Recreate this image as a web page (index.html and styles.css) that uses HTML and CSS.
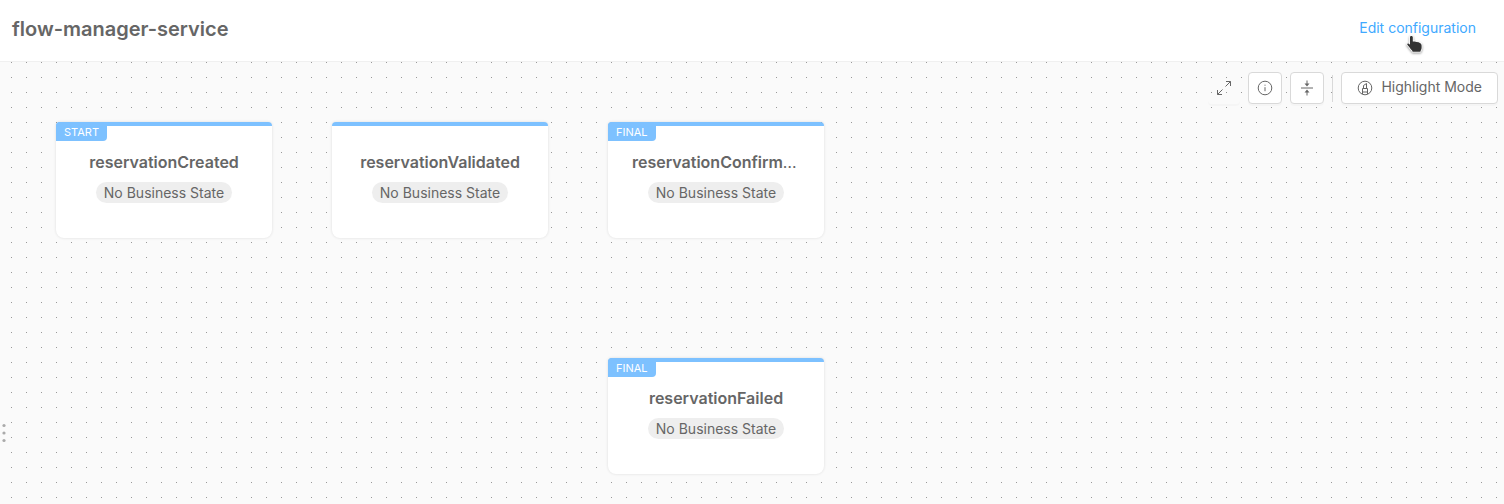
FILE: index.html
```html
<!DOCTYPE html>
<html lang="en">
<head>
<meta charset="utf-8">
<title>flow-manager-service</title>
<link rel="stylesheet" href="styles.css">
</head>
<body>
<header class="header">
  <h1 class="title">flow-manager-service</h1>
  <a class="edit-link" href="#">Edit configuration
    <svg class="cursor" width="18" height="20" viewBox="0 0 18 20" aria-hidden="true"><path d="M4 2.200C4 .6 6.700.6 6.800 2.200V6.600l2-.2 1.800.6 2 .2 1.800 1c.8.5 1.200 1.200 1.200 2.200v2.700c0 1.600-1 2.200-1.200 3.600H6.600C6.200 15.300 4.600 14.300 3.600 12.600L1.500 10c-.8-1.200.5-2 1.500-1.200L4 9.700z" fill="#333" stroke="#fff" stroke-width="1.600" paint-order="stroke" stroke-linejoin="round"/></svg>
  </a>
</header>
<main class="canvas">
  <div class="toolbar">
    <button class="tool plain" type="button" aria-label="Expand">
      <svg class="icon" viewBox="0 0 16 16"><path d="M9.500 6.500l5-5M10 1.500h4.500V6M6.500 9.500l-5 5M1.500 10v4.500H6"/></svg>
    </button>
    <button class="tool" type="button" aria-label="Information">
      <svg class="icon" viewBox="0 0 16 16"><circle cx="8" cy="8" r="6.800"/><path d="M8 7.200v4M8 4.700v1"/></svg>
    </button>
    <button class="tool" type="button" aria-label="Collapse">
      <svg class="icon" viewBox="0 0 16 16"><path d="M2 8h12M8 .5v4M8 11.500v4"/><path class="solid" d="M5.500 3.500h5L8 6.500zM5.500 12.500h5L8 9.500z"/></svg>
    </button>
    <span class="divider"></span>
    <button class="tool wide" type="button">
      <svg class="icon" viewBox="0 0 16 16"><circle cx="8" cy="8" r="6.800"/><path d="M5.500 14V8.500h5V14M6.500 8.500V5.500l3-2v5M5.500 12h5"/></svg>
      <span class="label">Highlight Mode</span>
    </button>
  </div>
  <article class="node created">
    <span class="tag">START</span>
    <h2 class="name"><span class="strong">reservationCreated</span></h2>
    <span class="state">No Business State</span>
  </article>
  <article class="node validated">
    <h2 class="name"><span class="strong">reservationValidated</span></h2>
    <span class="state">No Business State</span>
  </article>
  <article class="node confirmed">
    <span class="tag">FINAL</span>
    <h2 class="name"><span class="strong">reservationConfirmed</span></h2>
    <span class="state">No Business State</span>
  </article>
  <article class="node failed">
    <span class="tag">FINAL</span>
    <h2 class="name"><span class="strong">reservationFailed</span></h2>
    <span class="state">No Business State</span>
  </article>
  <svg class="handle" width="4" height="20" viewBox="0 0 4 20" aria-hidden="true"><circle cx="2" cy="2.500" r="1.600"/><circle cx="2" cy="10" r="1.600"/><circle cx="2" cy="17.500" r="1.600"/></svg>
</main>
</body>
</html>
```
FILE: styles.css
```css
* {
  box-sizing: border-box;
}

body {
  margin: 0;
  min-height: 100vh;
  display: flex;
  flex-direction: column;
  font-family: Inter, "Liberation Sans", sans-serif;
  font-size: 14px;
  line-height: 22px;
  color: #666;
  background: #fff;
}

.header {
  display: flex;
  align-items: center;
  justify-content: space-between;
  padding: 13px 28px 16px 12px;
  border-bottom: 1px solid #f0f0f0;
}

.title {
  margin: 0;
  font-size: 20px;
  line-height: 32px;
  font-weight: 600;
}

.edit-link {
  position: relative;
  padding-bottom: 2px;
  color: #40a9ff;
  text-decoration: none;
}

.cursor {
  position: absolute;
  left: 47px;
  top: 18px;
  z-index: 2;
  filter: drop-shadow(0 1px 1px rgba(0, 0, 0, 0.4));
}

.canvas {
  position: relative;
  flex: 1;
  overflow: hidden;
  background-color: #fafafa;
  background-image: linear-gradient(90deg, #fafafa 14px, transparent 14px), linear-gradient(#999 1px, transparent 1px);
  background-size: 15px 15px;
  background-position: 12px 0;
}

.toolbar {
  display: flex;
  justify-content: flex-end;
  align-items: center;
  gap: 8px;
  padding: 10px 6px;
}

.tool {
  display: flex;
  align-items: center;
  justify-content: center;
  gap: 8px;
  width: 34px;
  height: 32px;
  padding: 0;
  border: 1px solid #d9d9d9;
  border-radius: 4px;
  background: #fff;
  color: #666;
  font: inherit;
  box-shadow: 0 2px 0 rgba(0, 0, 0, 0.02);
}

.plain {
  width: 32px;
  border-color: transparent;
  background: transparent;
}

.wide {
  width: auto;
  padding: 0 15px;
}

.label {
  padding-bottom: 2px;
}

.icon {
  width: 16px;
  height: 16px;
  fill: none;
  stroke: #666;
  stroke-width: 1;
}

.solid {
  fill: #666;
  stroke: none;
}

.divider {
  width: 1px;
  height: 27px;
  background: #d9d9d9;
}

.node {
  position: absolute;
  width: 216px;
  height: 116px;
  padding: 24px 24px 0;
  border-top: 4px solid #7dc1ff;
  border-radius: 4px 4px 8px 8px;
  background: #fff;
  box-shadow: 0 0 3px rgba(0, 0, 0, 0.12);
  text-align: center;
}

.created {
  left: 56px;
  top: 60px;
}

.validated {
  left: 332px;
  top: 60px;
}

.confirmed {
  left: 608px;
  top: 60px;
}

.failed {
  left: 608px;
  top: 296px;
}

.tag {
  position: absolute;
  left: 0;
  top: -4px;
  padding: 1px 8px 0;
  border-radius: 4px 0 4px 0;
  background: #7dc1ff;
  color: #fff;
  font-size: 11px;
  line-height: 18px;
}

.name {
  margin: 0 0 8px;
  overflow: hidden;
  text-overflow: ellipsis;
  white-space: nowrap;
  font-size: 16px;
  line-height: 24px;
  font-weight: 400;
}

.strong {
  font-weight: 600;
}

.state {
  display: inline-block;
  padding: 0 8px;
  border-radius: 11px;
  background: #eee;
  line-height: 21px;
}

.handle {
  position: absolute;
  left: 2px;
  top: 361px;
  fill: #aaa;
}
```
